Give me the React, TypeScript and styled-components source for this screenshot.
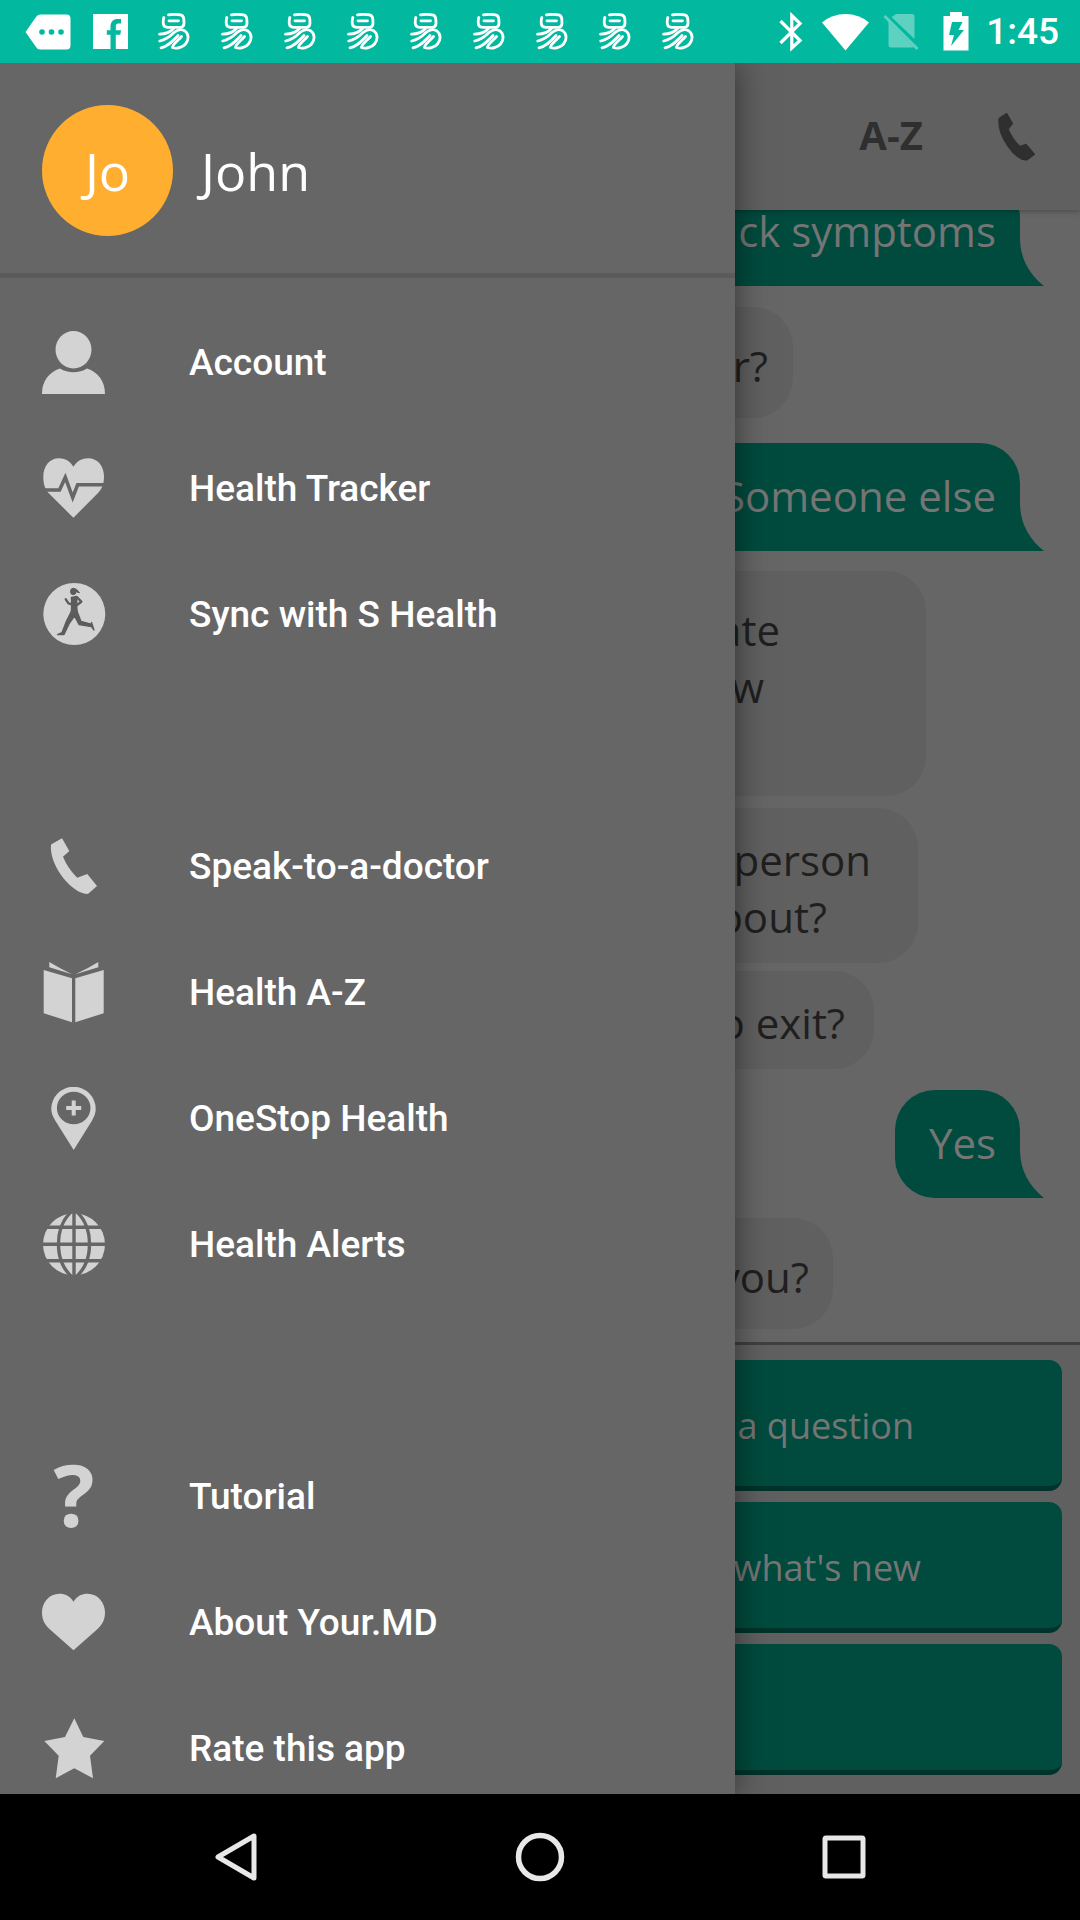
import React from "react";
import styled, { createGlobalStyle } from "styled-components";

const color = {
  status: "#02b99f",
  surface: "#666666",
  raised: "#606060",
  green: "#004b3e",
  greenEdge: "#00332b",
  ink: "#1f1f1f",
  mutedText: "#757575",
  icon: "#d3d3d3",
  nav: "#e8e8e8",
};
const openSans = `"Open Sans", "Noto Sans", sans-serif`;
const roboto = `Roboto, "Noto Sans", sans-serif`;

const GlobalStyle = createGlobalStyle`
  *, *::before, *::after { box-sizing: border-box; }
  body { margin: 0; background: #000; }
  button { margin: 0; padding: 0; border: 0; background: none; cursor: pointer; }
  svg { display: block; flex: none; }
`;

const Screen = styled.div`
  display: flex;
  flex-direction: column;
  height: 100vh;
  overflow: hidden;
  font-family: ${openSans};
`;

/* ---------- status bar ---------- */

const StatusBar = styled.header`
  flex: none;
  display: flex;
  justify-content: space-between;
  height: 63px;
  padding: 0 21px 0 16px;
  background: ${color.status};
  color: #fff;
`;

const StatusGroup = styled.div`
  display: flex;
  align-items: center;
`;

const StatusCell = styled.span<{ $wide?: boolean }>`
  display: flex;
  justify-content: center;
  width: ${(p) => (p.$wide ? 63 : 55)}px;
`;

const Clock = styled.time`
  padding-left: 3px;
  font: 500 37px/42px ${roboto};
`;

/* ---------- chat behind the drawer ---------- */

const Stage = styled.div`
  position: relative;
  flex: 1;
  min-height: 0;
  display: flex;
  flex-direction: column;
  overflow: hidden;
  background: ${color.surface};
`;

const ChatBar = styled.div`
  position: relative;
  z-index: 1;
  flex: none;
  display: flex;
  align-items: center;
  justify-content: flex-end;
  gap: 75px;
  height: 147px;
  padding-right: 44px;
  background: ${color.raised};
  box-shadow: 0 1px 6px rgba(0, 0, 0, 0.3);
`;

const ChatBarButton = styled.button`
  color: #2f2f2f;
`;

const ChatBarTextButton = styled(ChatBarButton)`
  && {
    padding-bottom: 4px;
    font: 700 40px/54px ${openSans};
  }
`;

const Conversation = styled.main`
  flex: 1;
  min-height: 0;
  display: flex;
  flex-direction: column;
  justify-content: flex-end;
  padding: 0 60px 13px 40px;
  overflow: hidden;
`;

const Bubble = styled.div<{ $after: number }>`
  flex: none;
  margin-bottom: ${(p) => p.$after}px;
  border-radius: 40px;
  font-size: 42px;
  line-height: 57px;
  text-align: right;
`;

const UserBubble = styled(Bubble)<{ $long?: boolean }>`
  position: relative;
  align-self: flex-end;
  min-width: ${(p) => (p.$long ? 380 : 0)}px;
  padding: 24px 24px 27px 34px;
  border-bottom-right-radius: 0;
  background: ${color.green};
  color: ${color.mutedText};
`;

const BotBubble = styled(Bubble)<{ $width: number; $compact?: boolean }>`
  width: ${(p) => p.$width}px;
  padding: ${(p) => (p.$compact ? "23px 0 18px" : "30px 0 24px")};
  background: ${color.raised};
  color: ${color.ink};
`;

const BotLine = styled.div<{ $inset: number }>`
  min-height: 57px;
  padding-right: ${(p) => p.$inset}px;
`;

const Tail = styled.svg`
  position: absolute;
  left: 100%;
  bottom: 0;
`;

const Replies = styled.div`
  flex: none;
  display: flex;
  flex-direction: column;
  gap: 11px;
  padding: 15px 18px 19px;
  border-top: 3px solid #404040;
  background: ${color.raised};
`;

const Reply = styled.button<{ $inset?: number }>`
  && {
    height: 131px;
    padding-top: 5px;
    padding-right: ${(p) => p.$inset ?? 0}px;
    border-bottom: 5px solid ${color.greenEdge};
    border-radius: 13px;
    background: ${color.green};
    color: ${color.mutedText};
    font: 400 36px/49px ${openSans};
    text-align: right;
  }
`;

/* ---------- drawer ---------- */

const Drawer = styled.aside`
  position: absolute;
  z-index: 2;
  inset: 0 345px 0 0;
  overflow-y: auto;
  scrollbar-width: none;
  background: ${color.surface};
  box-shadow: 0 0 32px rgba(0, 0, 0, 0.5);
  color: #fff;
`;

const Profile = styled.div`
  display: flex;
  align-items: center;
  gap: 28px;
  height: 215px;
  padding: 5px 42px 0;
  border-bottom: 5px solid #5b5b5b;
  font-size: 52px;
  line-height: 71px;
`;

const Avatar = styled.div`
  display: flex;
  align-items: center;
  justify-content: center;
  width: 131px;
  height: 131px;
  border-radius: 50%;
  background: #ffae2f;
`;

const Menu = styled.nav`
  display: flex;
  flex-direction: column;
  gap: 126px;
  padding-top: 22px;
`;

const MenuGroup = styled.ul`
  margin: 0;
  padding: 0;
  list-style: none;
`;

const MenuItem = styled.a`
  display: flex;
  align-items: center;
  gap: 83px;
  height: 126px;
  padding: 0 42px;
  color: #fff;
  font: 500 37px/44px ${roboto};
  text-decoration: none;
`;

const QuestionMark = styled.span`
  flex: none;
  width: 64px;
  padding-bottom: 6px;
  color: ${color.icon};
  font: 700 86px/64px ${openSans};
  text-align: center;
`;

/* ---------- navigation bar ---------- */

const NavBar = styled.footer`
  flex: none;
  display: grid;
  grid-template-columns: repeat(3, 1fr);
  height: 126px;
  padding: 0 84px;
  background: #000;
`;

const NavButton = styled.button`
  display: flex;
  align-items: center;
  justify-content: center;
`;

/* ---------- icons ---------- */

const MenuSvg = ({ children }: { children: React.ReactNode }) => (
  <svg width="64" height="64" viewBox="0 0 64 64" fill={color.icon} aria-hidden="true">
    {children}
  </svg>
);

const AccountIcon = () => (
  <MenuSvg>
    <ellipse cx="31.5" cy="18.7" rx="18" ry="18.7" />
    <path d="M0 63C0 50 7 41 18 37.5C26 42.500 37 42.500 45 37.500C56 41 63 50 63 63Z" />
  </MenuSvg>
);
const TrackerIcon = () => (
  <MenuSvg>
    <path d="M31.400 9.700C35 4 40 1.300 46 1.300C56 1.300 62 9.500 62 19.500C62 26 60.500 31 56.500 35.500L31.400 60.700L6 35.500C2.500 31 1.300 26 1.300 19.500C1.300 9.500 7.500 1.300 17 1.300C23 1.300 28 4 31.400 9.700Z" />
    <path d="M0 33H17.500L23.300 20.500L30.700 40.500L35.700 27.700H64" fill="none" stroke={color.surface} strokeWidth="3.600" />
  </MenuSvg>
);
const RunnerIcon = () => (
  <MenuSvg>
    <circle cx="32.300" cy="31" r="31" />
    <g fill="#5c5c5c" stroke="#5c5c5c" strokeLinejoin="round" strokeLinecap="round">
      <ellipse cx="31.300" cy="8.500" rx="2.800" ry="3.200" />
      <path d="M31 5.500Q35 5.200 37.500 9.800L33.500 8.600Z" strokeWidth="1" />
      <path d="M29.500 14.500L34.800 13.500L34.500 22L35 28.500L29.500 29L29.800 21Z" strokeWidth="1.600" />
      <path d="M23.800 16.300L26.500 20.300L30.500 21.500M34.800 14.200L39.300 18.700L35 22" fill="none" strokeWidth="2.400" />
      <path d="M29.500 28L35 28L39 38.500L50 41.300L49.500 39.500L52 47L49.500 43.500L37 41.500L32.500 33L27.500 40L22 51.500L15.500 51.500L20 49.500L24.500 38Z" strokeWidth="1.300" />
    </g>
  </MenuSvg>
);
const SpeakIcon = () => (
  <MenuSvg>
    <path d="M9 9.500L20 3.300L27.300 16L21 21.700C25 31 29.500 37 35.300 42.700L45.300 39L55 51L46.500 58.500Q45 59.300 42 58.500C27 55 7 29 9 9.500Z" />
  </MenuSvg>
);
const BookIcon = () => (
  <MenuSvg>
    <path d="M1.700 9L30 17.300V61.300L1.700 52.300ZM61.700 9L33.300 17.300V61.300L61.700 52.300ZM7.300 1Q18 7.500 30 13.300L7.300 6.300ZM56.300 1Q46 7.500 33.300 13.300L56.300 6.300Z" />
  </MenuSvg>
);
const PinIcon = () => (
  <MenuSvg>
    <path
      fillRule="evenodd"
      d="M31.700 63L13.500 34C10.500 29 9.300 26 9.300 22A22.200 22.200 0 0 1 53.700 22C53.700 26 52.500 29 49.800 34ZM31.700 4.700A16.800 16.300 0 1 0 31.700 37.300A16.800 16.300 0 1 0 31.700 4.700Z"
    />
    <path d="M24.200 21H39.200M31.700 13.500V28.500" stroke={color.icon} strokeWidth="4" />
  </MenuSvg>
);
const GlobeIcon = () => (
  <MenuSvg>
    <circle cx="32" cy="31.300" r="31" />
    <g fill="none" stroke={color.surface} strokeWidth="3.400">
      <path d="M32 0V64M0 31.300H64M0 14.300H64M0 47.700H64" />
      <path d="M30 -2C12 14 12 48 30 64M34 -2C52 14 52 48 34 64" />
    </g>
  </MenuSvg>
);
const HeartIcon = () => (
  <MenuSvg>
    <path d="M31.500 10.700C35 5 40 2.700 45.500 2.700C56 2.700 63 11.500 63 21.500C63 29 60 34 55 38.500L31.500 59.300L8 38.500C3 34 0 29 0 21.500C0 11.500 7 2.700 17.500 2.700C23 2.700 28 5 31.500 10.700Z" />
  </MenuSvg>
);
const StarIcon = () => (
  <MenuSvg>
    <path d="M32.300 1.300L41.300 20L62.300 24L48 38.700L51 61.300L32.300 51.300L13.700 61.300L16.700 38.700L2.300 24L23 20Z" />
  </MenuSvg>
);

const MoreTagIcon = () => (
  <svg width="46" height="36" viewBox="0 0 46 36" aria-hidden="true">
    <path d="M15 .5H41.500Q45.500 .5 45.500 4.500V31.500Q45.500 35.500 41.500 35.500H15Q12.500 35.500 11 33L.5 18L11 3Q12.500 .5 15 .5Z" fill="#fff" />
    <g fill={color.status}>
      <circle cx="17" cy="18" r="2.800" />
      <circle cx="26.500" cy="18" r="2.800" />
      <circle cx="36" cy="18" r="2.800" />
    </g>
  </svg>
);
const FacebookIcon = () => (
  <svg width="35" height="35" viewBox="0 0 35 35" aria-hidden="true">
    <path d="M0 0H35V35H0Z" fill="#fff" />
    <path d="M17.500 35V20.800H13.800V16.300H17.500V13C17.500 7.500 20.500 5 24.500 5H28V9.500H25.500C23.500 9.500 22.800 10.500 22.800 12.500V16.300H28L27.300 20.800H22.800V35Z" fill={color.status} />
  </svg>
);
const YiIcon = () => (
  <svg width="32" height="37" viewBox="0 0 32 37" fill="none" stroke="#fff" strokeWidth="2.800" strokeLinecap="round" aria-hidden="true">
    <path d="M10.500 1.800Q16 .8 22.500 1.800Q25.500 2.300 25.800 6L26 10.500Q25.800 14 22.500 14.300H9.500Q5.500 14 5.300 10.500Q5 7 5.800 4.500" />
    <path d="M11 7.800H20.500" />
    <path d="M1.500 21.200C7 21 12 19.500 15.500 15.500" />
    <path d="M1.700 28C9 26.500 13 22.500 16 19.500C19.500 16.300 24 16 27 18C31 21 31 27 27.500 31C24.500 34.500 19 36 14.500 34.500C14 32 19 28.500 23.500 23.500" />
    <path d="M3 34.800C10 33.500 14.500 28 20 22.500" />
  </svg>
);
const BluetoothIcon = () => (
  <svg width="24" height="40" viewBox="0 0 24 40" fill="none" stroke="#fff" strokeWidth="3.200" aria-hidden="true">
    <path d="M1.500 9L21 28.500L12.800 36V3.500L21 11.500L1.500 31" />
  </svg>
);
const WifiIcon = () => (
  <svg width="47" height="38" viewBox="0 0 47 38" fill="#fff" aria-hidden="true">
    <path d="M0 9.500Q10 1 23.500 1T47 9.500L23.500 37.500Z" />
  </svg>
);
const NoSimIcon = () => (
  <svg width="36" height="38" viewBox="0 0 36 38" fill="#fff" opacity="0.36" aria-hidden="true">
    <path d="M11 2.500L13 1H29Q31.500 1 31.500 3.500V26L8.500 4ZM5.500 8.500L30.500 34Q30 34.500 28.500 34.500H8Q5.500 34.500 5.500 32Z" />
    <path d="M1.500 3L34.500 36" stroke="#fff" strokeWidth="3" />
  </svg>
);
const BatteryIcon = () => (
  <svg width="26" height="39" viewBox="0 0 26 39" aria-hidden="true">
    <path d="M7 0H19V4H25.500V38.500H.5V4H7Z" fill="#fff" />
    <path d="M9 10H19.500L15.500 18H21L8 34L11 23H6Z" fill={color.status} />
  </svg>
);
const CallIcon = () => (
  <svg width="38" height="49" viewBox="0 0 38 49" aria-hidden="true">
    <path
      d="M1.500 6.500L8.500 2L14 11.500L9.500 17C13 25 17 31 22 35L28 32.800L36 42.300L29 47.500C18 49 -.5 24 1.500 6.500Z"
      fill="currentColor"
      stroke="currentColor"
      strokeWidth="2"
      strokeLinejoin="round"
    />
  </svg>
);

const menu: { label: string; icon: React.ReactNode }[][] = [
  [
    { label: "Account", icon: <AccountIcon /> },
    { label: "Health Tracker", icon: <TrackerIcon /> },
    { label: "Sync with S Health", icon: <RunnerIcon /> },
  ],
  [
    { label: "Speak-to-a-doctor", icon: <SpeakIcon /> },
    { label: "Health A-Z", icon: <BookIcon /> },
    { label: "OneStop Health", icon: <PinIcon /> },
    { label: "Health Alerts", icon: <GlobeIcon /> },
  ],
  [
    { label: "Tutorial", icon: <QuestionMark aria-hidden="true">?</QuestionMark> },
    { label: "About Your.MD", icon: <HeartIcon /> },
    { label: "Rate this app", icon: <StarIcon /> },
  ],
];

const UserMessage = ({ text, after, long }: { text: string; after: number; long?: boolean }) => (
  <UserBubble $after={after} $long={long}>
    {text}
    <Tail width="24" height="48" viewBox="0 0 24 48" fill={color.green} aria-hidden="true">
      <path d="M-1 0H0C0 20 9 36 24 48H-1Z" />
    </Tail>
  </UserBubble>
);

type Line = { text: string; inset: number };

const BotMessage = ({ lines, width, after, compact }: { lines: Line[]; width: number; after: number; compact?: boolean }) => (
  <BotBubble $width={width} $after={after} $compact={compact}>
    {lines.map((line, i) => (
      <BotLine key={i} $inset={line.inset}>
        {line.text}
      </BotLine>
    ))}
  </BotBubble>
);

export default function App() {
  return (
    <Screen>
      <GlobalStyle />
      <StatusBar>
        <StatusGroup>
          <StatusCell $wide><MoreTagIcon /></StatusCell>
          <StatusCell $wide><FacebookIcon /></StatusCell>
          {Array.from({ length: 9 }, (_, i) => (
            <StatusCell $wide key={i}><YiIcon /></StatusCell>
          ))}
        </StatusGroup>
        <StatusGroup>
          <StatusCell><BluetoothIcon /></StatusCell>
          <StatusCell><WifiIcon /></StatusCell>
          <StatusCell><NoSimIcon /></StatusCell>
          <StatusCell><BatteryIcon /></StatusCell>
          <Clock>1:45</Clock>
        </StatusGroup>
      </StatusBar>

      <Stage>
        <ChatBar>
          <ChatBarTextButton>A-Z</ChatBarTextButton>
          <ChatBarButton aria-label="Call"><CallIcon /></ChatBarButton>
        </ChatBar>
        <Conversation>
          <UserMessage text="ck symptoms" after={21} long />
          <BotMessage width={753} after={25} lines={[{ text: "r?", inset: 25 }]} />
          <UserMessage text="Someone else" after={20} long />
          <BotMessage
            width={886}
            after={12}
            lines={[{ text: "ate", inset: 146 }, { text: "w", inset: 162 }, { text: "", inset: 0 }]}
          />
          <BotMessage
            width={878}
            after={8}
            compact
            lines={[{ text: "person", inset: 47 }, { text: "about?", inset: 91 }]}
          />
          <BotMessage width={834} after={21} compact lines={[{ text: "to exit?", inset: 29 }]} />
          <UserMessage text="Yes" after={20} />
          <BotMessage width={793} after={0} lines={[{ text: "you?", inset: 24 }]} />
        </Conversation>
        <Replies>
          <Reply $inset={148}>a question</Reply>
          <Reply $inset={141}>what's new</Reply>
          <Reply aria-label="More" />
        </Replies>

        <Drawer>
          <Profile>
            <Avatar>Jo</Avatar>
            <span>John</span>
          </Profile>
          <Menu>
            {menu.map((group, i) => (
              <MenuGroup key={i}>
                {group.map((item) => (
                  <li key={item.label}>
                    <MenuItem href="#">
                      {item.icon}
                      {item.label}
                    </MenuItem>
                  </li>
                ))}
              </MenuGroup>
            ))}
          </Menu>
        </Drawer>
      </Stage>

      <NavBar>
        <NavButton aria-label="Back">
          <svg width="44" height="50" viewBox="0 0 44 50" fill="none" stroke={color.nav} strokeWidth="5" strokeLinejoin="round">
            <path d="M40 4V46L4 25Z" />
          </svg>
        </NavButton>
        <NavButton aria-label="Home">
          <svg width="50" height="50" viewBox="0 0 50 50" fill="none" stroke={color.nav} strokeWidth="5.500">
            <circle cx="25" cy="25" r="21.500" />
          </svg>
        </NavButton>
        <NavButton aria-label="Recent apps">
          <svg width="44" height="44" viewBox="0 0 44 44" fill="none" stroke={color.nav} strokeWidth="5">
            <rect x="3" y="3" width="38" height="38" rx="1" />
          </svg>
        </NavButton>
      </NavBar>
    </Screen>
  );
}
